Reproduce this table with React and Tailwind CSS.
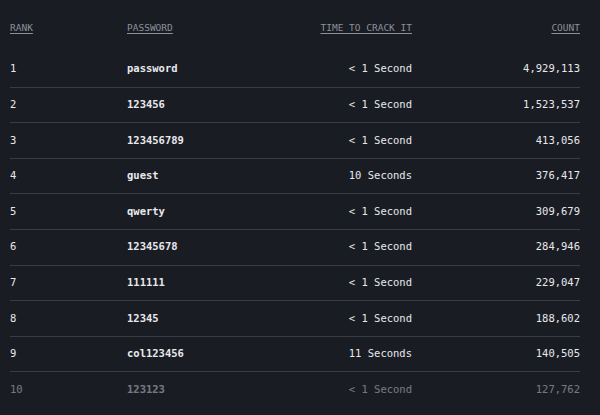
const rows = [
  ["1", "password", "< 1 Second", "4,929,113"],
  ["2", "123456", "< 1 Second", "1,523,537"],
  ["3", "123456789", "< 1 Second", "413,056"],
  ["4", "guest", "10 Seconds", "376,417"],
  ["5", "qwerty", "< 1 Second", "309,679"],
  ["6", "12345678", "< 1 Second", "284,946"],
  ["7", "111111", "< 1 Second", "229,047"],
  ["8", "12345", "< 1 Second", "188,602"],
  ["9", "col123456", "11 Seconds", "140,505"],
  ["10", "123123", "< 1 Second", "127,762"],
];

const Row = ({ row, last }) => {
  const [rank, pw, time, count] = row;
  return (
    <div
      className={`grid grid-cols-[117px_1fr_170px_168px] items-center h-[35.6px] ${
        last ? "opacity-45" : "border-b border-[#3a3d45]"
      }`}
    >
      <span>{rank}</span>
      <span className="font-bold">{pw}</span>
      <span className="text-right">{time}</span>
      <span className="text-right">{count}</span>
    </div>
  );
};

export default function App() {
  return (
    <div
      className="w-[600px] h-[415px] overflow-hidden bg-[#1a1c23] text-[#e8e9ec] pl-[10px] pr-[20px] pt-[21px]"
      style={{ fontFamily: '"DejaVu Sans Mono", monospace' }}
    >
      <div className="grid grid-cols-[117px_1fr_170px_168px] text-[9.5px] text-[#8d909a] underline underline-offset-2 h-[14px] items-center mb-[17px]">
        <span>RANK</span>
        <span>PASSWORD</span>
        <span className="text-right">TIME TO CRACK IT</span>
        <span className="text-right">COUNT</span>
      </div>
      <div className="text-[10.5px]">
        {rows.map((r, i) => (
          <Row key={r[0]} row={r} last={i === rows.length - 1} />
        ))}
      </div>
    </div>
  );
}
